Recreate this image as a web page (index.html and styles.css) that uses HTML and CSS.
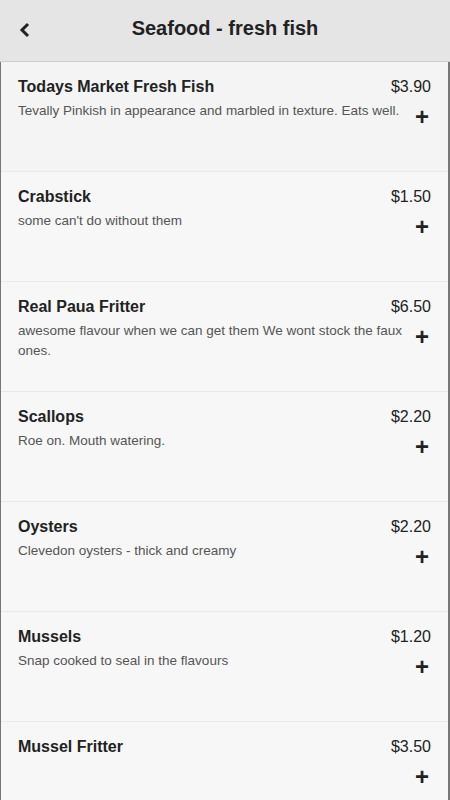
FILE: index.html
```html
<!DOCTYPE html>
<html>
<head>
    <link rel="stylesheet" href="styles.css">
</head>
<body>
    <div class="header">
        <button class="back">
            <svg width="12" height="16" viewBox="0 0 12 16"><path d="M9 2 L3 8 L9 14" fill="none" stroke="#222" stroke-width="3"/></svg>
        </button>
        <h1>Seafood - fresh fish</h1>
    </div>

    <div class="menu-list">
        <div class="item active">
            <div class="item-head">
                <span class="name">Todays Market Fresh Fish</span>
                <span class="price">$3.90</span>
            </div>
            <div class="item-body">
                <p class="desc">Tevally Pinkish in appearance and marbled in texture. Eats well.</p>
                <span class="add">+</span>
            </div>
        </div>
        <div class="item">
            <div class="item-head">
                <span class="name">Crabstick</span>
                <span class="price">$1.50</span>
            </div>
            <div class="item-body">
                <p class="desc">some can't do without them</p>
                <span class="add">+</span>
            </div>
        </div>
        <div class="item">
            <div class="item-head">
                <span class="name">Real Paua Fritter</span>
                <span class="price">$6.50</span>
            </div>
            <div class="item-body">
                <p class="desc">awesome flavour when we can get them We wont stock the faux ones.</p>
                <span class="add">+</span>
            </div>
        </div>
        <div class="item">
            <div class="item-head">
                <span class="name">Scallops</span>
                <span class="price">$2.20</span>
            </div>
            <div class="item-body">
                <p class="desc">Roe on. Mouth watering.</p>
                <span class="add">+</span>
            </div>
        </div>
        <div class="item">
            <div class="item-head">
                <span class="name">Oysters</span>
                <span class="price">$2.20</span>
            </div>
            <div class="item-body">
                <p class="desc">Clevedon oysters - thick and creamy</p>
                <span class="add">+</span>
            </div>
        </div>
        <div class="item">
            <div class="item-head">
                <span class="name">Mussels</span>
                <span class="price">$1.20</span>
            </div>
            <div class="item-body">
                <p class="desc">Snap cooked to seal in the flavours</p>
                <span class="add">+</span>
            </div>
        </div>
        <div class="item">
            <div class="item-head">
                <span class="name">Mussel Fritter</span>
                <span class="price">$3.50</span>
            </div>
            <div class="item-body">
                <p class="desc"></p>
                <span class="add">+</span>
            </div>
        </div>
    </div>
</body>
</html>
```

FILE: styles.css
```css
body {
    margin: 0;
    font-family: "Liberation Sans", Arial, sans-serif;
    background: #f7f7f7;
    color: #222;
}
.header {
    height: 62px;
    box-sizing: border-box;
    padding-bottom: 5px;
    background: #e5e5e5;
    border-bottom: 1px solid #cfcfcf;
    display: flex;
    align-items: center;
    justify-content: center;
    position: relative;
}
.header h1 {
    margin: 0;
    font-size: 20px;
    font-weight: bold;
    color: #222;
}
.back {
    position: absolute;
    left: 18px;
    top: 22px;
    background: none;
    border: none;
    padding: 0;
    width: 14px;
    height: 16px;
}
.menu-list {
    border-left: 1px solid #777;
    border-right: 2px solid #777;
}
.item {
    height: 110px;
    box-sizing: border-box;
    padding: 15px 17px 0 17px;
    border-bottom: 1px solid #e9e9e9;
    background: #f7f7f7;
}
.item.active {
    background: #f4f4f4;
}
.item-head {
    display: flex;
    justify-content: space-between;
    align-items: baseline;
    line-height: 20px;
}
.name {
    font-size: 16px;
    font-weight: bold;
}
.price {
    font-size: 16px;
}
.item-body {
    display: flex;
    justify-content: space-between;
    align-items: flex-start;
    margin-top: 4px;
}
.desc {
    flex: 1;
    margin: 0;
    font-size: 13.5px;
    line-height: 20px;
    color: #555;
}
.add {
    font-size: 24px;
    font-weight: bold;
    line-height: 20px;
    margin-top: 6px;
    margin-left: 4px;
    margin-right: 2px;
    color: #222;
}
```
